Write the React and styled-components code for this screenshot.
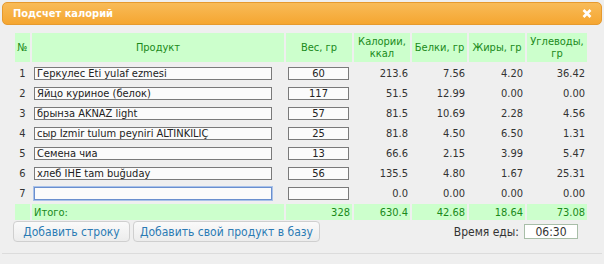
import React from "react";
import styled, { createGlobalStyle } from "styled-components";

const Global = createGlobalStyle`
  html, body { margin: 0; padding: 0; background: #efefef; }
  body { font-family: "DejaVu Sans Condensed", "DejaVu Sans", sans-serif; }
`;

const Dialog = styled.div`
  width: 604px;
  height: 264px;
  box-sizing: border-box;
  padding: 2px;
  background: #efefef;
  display: flex;
  flex-direction: column;
`;

const TitleBar = styled.div`
  height: 23px;
  box-sizing: border-box;
  border: 1px solid #e69a2e;
  border-radius: 5px;
  background: linear-gradient(#f8bb58, #f5a631);
  display: flex;
  align-items: center;
  justify-content: space-between;
  padding: 0 9px 0 10px;
  color: #fff;
  font-weight: bold;
  font-size: 11px;
`;

const Close = styled.span`
  display: flex;
  align-items: center;
`;

const Content = styled.div`
  padding: 6px 0 0 11px;
  flex: 1;
`;

const Table = styled.table`
  border-collapse: separate;
  border-spacing: 2px;
  font-size: 11px;
  color: #333;
  table-layout: fixed;
`;

const Th = styled.th`
  width: ${(p) => p.$w}px;
  height: 29px;
  padding: 0;
  background: #ccffcc;
  color: #1a8a1a;
  font-weight: normal;
  text-align: center;
  line-height: 12px;
  font-size: 11px;
`;

const Td = styled.td`
  height: 18px;
  padding: 0 ${(p) => (p.$num ? 2 : 0)}px 0 0;
  text-align: ${(p) => (p.$num ? "right" : p.$center ? "center" : "left")};
  white-space: nowrap;
`;

const TotalTd = styled.td`
  height: 16px;
  padding: 0 ${(p) => (p.$num ? 2 : 0)}px 0 ${(p) => (p.$num ? 0 : 2)}px;
  background: #ccffcc;
  color: #1a8a1a;
  text-align: ${(p) => (p.$num ? "right" : "left")};
`;

const TextInput = styled.input`
  box-sizing: border-box;
  width: ${(p) => p.$w}px;
  height: 13px;
  margin: 0 0 0 ${(p) => p.$ml}px;
  padding: 0 2px;
  border: 1px solid ${(p) => (p.$focus ? "#6a8fce" : "#7a7a7a")};
  box-shadow: ${(p) => (p.$focus ? "0 0 0 1px #a9c2ea" : "none")};
  background: #fbfbfb;
  font-family: inherit;
  font-size: 11px;
  line-height: 11px;
  color: #222;
  text-align: ${(p) => (p.$center ? "center" : "left")};
  outline: none;
  display: block;
`;

const Footer = styled.div`
  display: flex;
  align-items: center;
  margin-top: -1px;
  padding-right: 24px;
`;

const Button = styled.button`
  height: 21px;
  width: ${(p) => p.$w}px;
  margin-right: 3px;
  box-sizing: border-box;
  border: 1px solid #cfcfcf;
  border-radius: 4px;
  background: linear-gradient(#fafafa, #ececec);
  color: #2b7bb4;
  font-family: inherit;
  font-size: 12px;
  padding: 0;
`;

const TimeLabel = styled.span`
  margin-left: auto;
  font-size: 12px;
  color: #333;
  margin-right: 5px;
`;

const TimeInput = styled.input`
  box-sizing: border-box;
  width: 54px;
  height: 15px;
  border: 1px solid #a8bea8;
  background: #fff;
  font-family: inherit;
  font-size: 12px;
  color: #333;
  text-align: center;
  padding: 0;
  outline: none;
`;

const Divider = styled.div`
  height: 1px;
  background: #dcdcdc;
  margin-bottom: 8px;
`;

const rows = [
  ["Геркулес Eti yulaf ezmesi", "60", "213.6", "7.56", "4.20", "36.42"],
  ["Яйцо куриное (белок)", "117", "51.5", "12.99", "0.00", "0.00"],
  ["брынза AKNAZ light", "57", "81.5", "10.69", "2.28", "4.56"],
  ["сыр İzmir tulum peyniri ALTINKILIÇ", "25", "81.8", "4.50", "6.50", "1.31"],
  ["Семена чиа", "13", "66.6", "2.15", "3.99", "5.47"],
  ["хлеб IHE tam buğuday", "56", "135.5", "4.80", "1.67", "25.31"],
  ["", "", "0.0", "0.00", "0.00", "0.00"],
];

export default function App() {
  return (
    <>
      <Global />
      <Dialog>
        <TitleBar>
          <span>Подсчет калорий</span>
          <Close>
            <svg width="10" height="9" viewBox="0 0 10 9">
              <path d="M1.5 1 L8.5 8 M8.5 1 L1.5 8" stroke="#fff" strokeWidth="2.6" />
            </svg>
          </Close>
        </TitleBar>
        <Content>
          <Table>
            <thead>
              <tr>
                <Th $w={15}>№</Th>
                <Th $w={252}>Продукт</Th>
                <Th $w={66}>Вес, гр</Th>
                <Th $w={56}>Калории,<br />ккал</Th>
                <Th $w={55}>Белки, гр</Th>
                <Th $w={56}>Жиры, гр</Th>
                <Th $w={60}>Углеводы,<br />гр</Th>
              </tr>
            </thead>
            <tbody>
              {rows.map((r, i) => (
                <tr key={i}>
                  <Td $center>{i + 1}</Td>
                  <Td>
                    <TextInput $w={238} $ml={2} $focus={i === 6} defaultValue={r[0]} />
                  </Td>
                  <Td>
                    <TextInput $w={61} $ml={2} $center defaultValue={r[1]} />
                  </Td>
                  <Td $num>{r[2]}</Td>
                  <Td $num>{r[3]}</Td>
                  <Td $num>{r[4]}</Td>
                  <Td $num>{r[5]}</Td>
                </tr>
              ))}
              <tr>
                <TotalTd></TotalTd>
                <TotalTd>Итого:</TotalTd>
                <TotalTd $num>328</TotalTd>
                <TotalTd $num>630.4</TotalTd>
                <TotalTd $num>42.68</TotalTd>
                <TotalTd $num>18.64</TotalTd>
                <TotalTd $num>73.08</TotalTd>
              </tr>
            </tbody>
          </Table>
          <Footer>
            <Button $w={117}>Добавить строку</Button>
            <Button $w={187}>Добавить свой продукт в базу</Button>
            <TimeLabel>Время еды:</TimeLabel>
            <TimeInput defaultValue="06:30" />
          </Footer>
        </Content>
        <Divider />
      </Dialog>
    </>
  );
}
